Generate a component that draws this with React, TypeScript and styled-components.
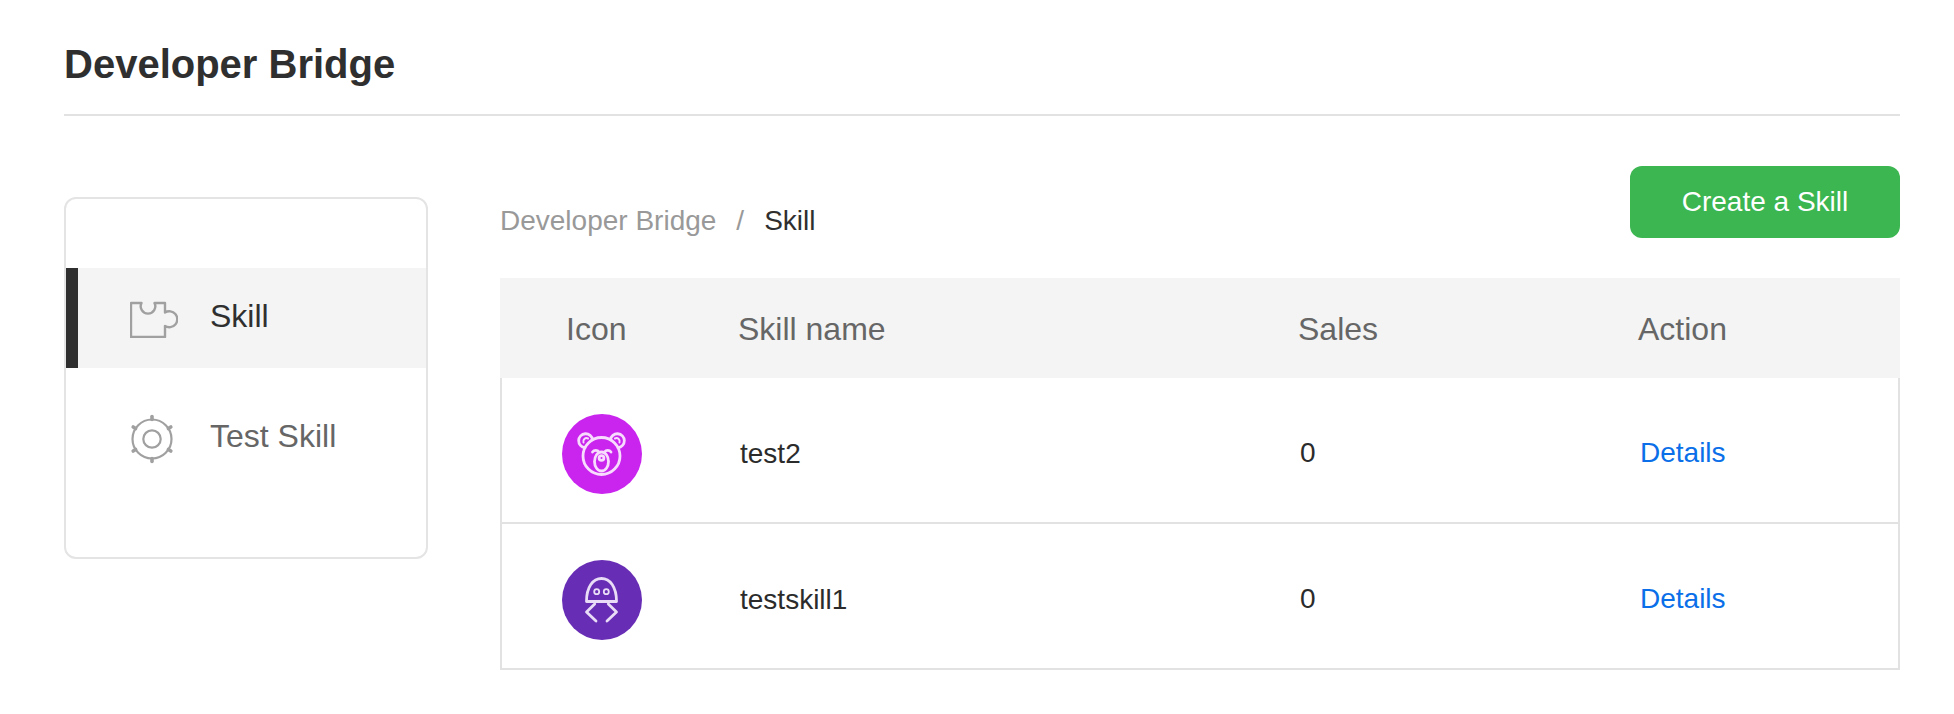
import React from "react";
import styled, { createGlobalStyle } from "styled-components";

const GlobalStyle = createGlobalStyle`
  body {
    margin: 0;
    background: #fff;
    font-family: "Liberation Sans", Arial, sans-serif;
  }
`;

const Page = styled.div`
  padding: 0 54px 0 64px;
`;

const Header = styled.header`
  height: 116px;
  border-bottom: 2px solid #e2e2e2;
  display: flex;
  align-items: center;
  padding-top: 14px;
  box-sizing: border-box;
`;

const Title = styled.h1`
  margin: 0;
  font-size: 40px;
  font-weight: 700;
  color: #2f2f2f;
`;

const Body = styled.div`
  display: flex;
  align-items: flex-start;
  gap: 72px;
  padding-top: 50px;
`;

const Sidebar = styled.nav`
  width: 364px;
  height: 362px;
  margin-top: 31px;
  box-sizing: border-box;
  border: 2px solid #e4e4e4;
  border-radius: 12px;
  padding: 69px 0;
  display: flex;
  flex-direction: column;
  gap: 20px;
  flex-shrink: 0;
`;

const NavItem = styled.a<{ $active?: boolean }>`
  height: 100px;
  display: flex;
  align-items: center;
  box-sizing: border-box;
  border-left: 12px solid ${(p) => (p.$active ? "#2f2f2f" : "transparent")};
  background: ${(p) => (p.$active ? "#f4f4f4" : "transparent")};
  color: ${(p) => (p.$active ? "#2f2f2f" : "#666")};
  font-size: 32px;
`;

const NavIcon = styled.span`
  width: 80px;
  margin-left: 52px;
  display: flex;
  align-items: center;
`;

const NavLabel = styled.span`
  padding-bottom: 4px;
`;

const Main = styled.main`
  flex: 1;
  min-width: 0;
`;

const TopBar = styled.div`
  height: 72px;
  display: flex;
  justify-content: space-between;
  align-items: flex-start;
  margin-bottom: 40px;
`;

const Breadcrumb = styled.div`
  margin-top: 37px;
  font-size: 28px;
  line-height: 36px;
  color: #999;
`;

const Separator = styled.span`
  margin: 0 20px;
`;

const Current = styled.span`
  color: #2f2f2f;
`;

const CreateButton = styled.button`
  width: 270px;
  height: 72px;
  border: 0;
  border-radius: 12px;
  background: #3bb650;
  color: #fff;
  font-family: inherit;
  font-size: 28px;
`;

const TableHead = styled.div`
  display: grid;
  grid-template-columns: 172px 560px 340px 1fr;
  align-items: center;
  height: 100px;
  box-sizing: border-box;
  background: #f4f4f4;
  color: #666;
  font-size: 32px;
  padding: 2px 0 0 66px;
`;

const Row = styled.div`
  display: grid;
  grid-template-columns: 178px 560px 340px 1fr;
  align-items: center;
  height: 146px;
  box-sizing: border-box;
  border: 2px solid #e2e2e2;
  border-top: 0;
  padding: 8px 0 0 60px;
  color: #2b2b2b;
  font-size: 28px;
`;

const Avatar = styled.div<{ $color: string }>`
  width: 80px;
  height: 80px;
  border-radius: 50%;
  background: ${(p) => p.$color};
`;

const Sales = styled.div`
  padding-bottom: 2px;
`;

const DetailsLink = styled.a`
  color: #0a6fe8;
  padding-bottom: 2px;
`;

const PuzzleIcon = () => (
  <svg width="48" height="39" viewBox="0 -3 48 39" fill="none" stroke="#a0a0a0" strokeWidth="2.4" strokeLinejoin="round">
    <path d="M1 1H11.5A7.3 7.3 0 1 0 24.5 1H35V10.5A8 8 0 1 1 35 24V35H1Z" />
  </svg>
);

const GearIcon = () => (
  <svg width="44" height="52" viewBox="0 1 44 52" fill="none" stroke="#a0a0a0" strokeWidth="2.2">
    <circle cx="22" cy="28" r="19.5" />
    <circle cx="22" cy="28" r="8.7" />
    <g strokeWidth="3.6" strokeLinecap="round">
      <path d="M22 8.5V5.5" />
      <path d="M22 47.5V50.5" />
      <path d="M5.6 17.5L3.2 16" />
      <path d="M38.4 17.5L40.8 16" />
      <path d="M5.6 38.5L3.2 40" />
      <path d="M38.4 38.5L40.8 40" />
    </g>
  </svg>
);

const BearIcon = () => (
  <svg width="80" height="80" viewBox="0 0 80 80" fill="none" stroke="#f8dcfd" strokeWidth="2.8" strokeLinecap="round">
    <circle cx="39.5" cy="42" r="18.5" />
    <path d="M30.6 25.8A7 7 0 1 0 23 33.7" />
    <path d="M48.4 25.8A7 7 0 1 1 56 33.7" />
    <path d="M21.5 28.5A3.2 3.2 0 0 1 26 24.5" strokeWidth="2" />
    <path d="M57.5 28.5A3.2 3.2 0 0 0 53 24.5" strokeWidth="2" />
    <path d="M30.5 38A4 4 0 0 1 37 38" />
    <path d="M42.5 38A4 4 0 0 1 49 38" />
    <ellipse cx="39.5" cy="47.5" rx="7" ry="9.5" />
    <circle cx="39.5" cy="44" r="2.4" />
  </svg>
);

const RobotIcon = () => (
  <svg width="80" height="80" viewBox="0 0 80 80" fill="none" stroke="#e8dcf6" strokeWidth="2.8" strokeLinecap="round" strokeLinejoin="round">
    <path d="M24.5 41.5C24.5 27 31 18.5 39.5 18.5S54.5 27 54.5 41.5Z" />
    <circle cx="34.7" cy="31.7" r="2.5" strokeWidth="1.8" />
    <circle cx="44.3" cy="31.7" r="2.5" strokeWidth="1.8" />
    <path d="M32.7 44L24.5 52L34 61" />
    <path d="M46.3 44L54.5 52L45 61" />
  </svg>
);

const skills = [
  { name: "test2", sales: 0, color: "#c925ee", icon: <BearIcon /> },
  { name: "testskill1", sales: 0, color: "#682db5", icon: <RobotIcon /> },
];

export default function App() {
  return (
    <Page>
      <GlobalStyle />
      <Header>
        <Title>Developer Bridge</Title>
      </Header>
      <Body>
        <Sidebar>
          <NavItem $active>
            <NavIcon>
              <PuzzleIcon />
            </NavIcon>
            <NavLabel>Skill</NavLabel>
          </NavItem>
          <NavItem>
            <NavIcon>
              <GearIcon />
            </NavIcon>
            <NavLabel>Test Skill</NavLabel>
          </NavItem>
        </Sidebar>
        <Main>
          <TopBar>
            <Breadcrumb>
              Developer Bridge
              <Separator>/</Separator>
              <Current>Skill</Current>
            </Breadcrumb>
            <CreateButton>Create a Skill</CreateButton>
          </TopBar>
          <TableHead>
            <div>Icon</div>
            <div>Skill name</div>
            <div>Sales</div>
            <div>Action</div>
          </TableHead>
          {skills.map((s) => (
            <Row key={s.name}>
              <div>
                <Avatar $color={s.color}>{s.icon}</Avatar>
              </div>
              <div>{s.name}</div>
              <Sales>{s.sales}</Sales>
              <DetailsLink>Details</DetailsLink>
            </Row>
          ))}
        </Main>
      </Body>
    </Page>
  );
}
